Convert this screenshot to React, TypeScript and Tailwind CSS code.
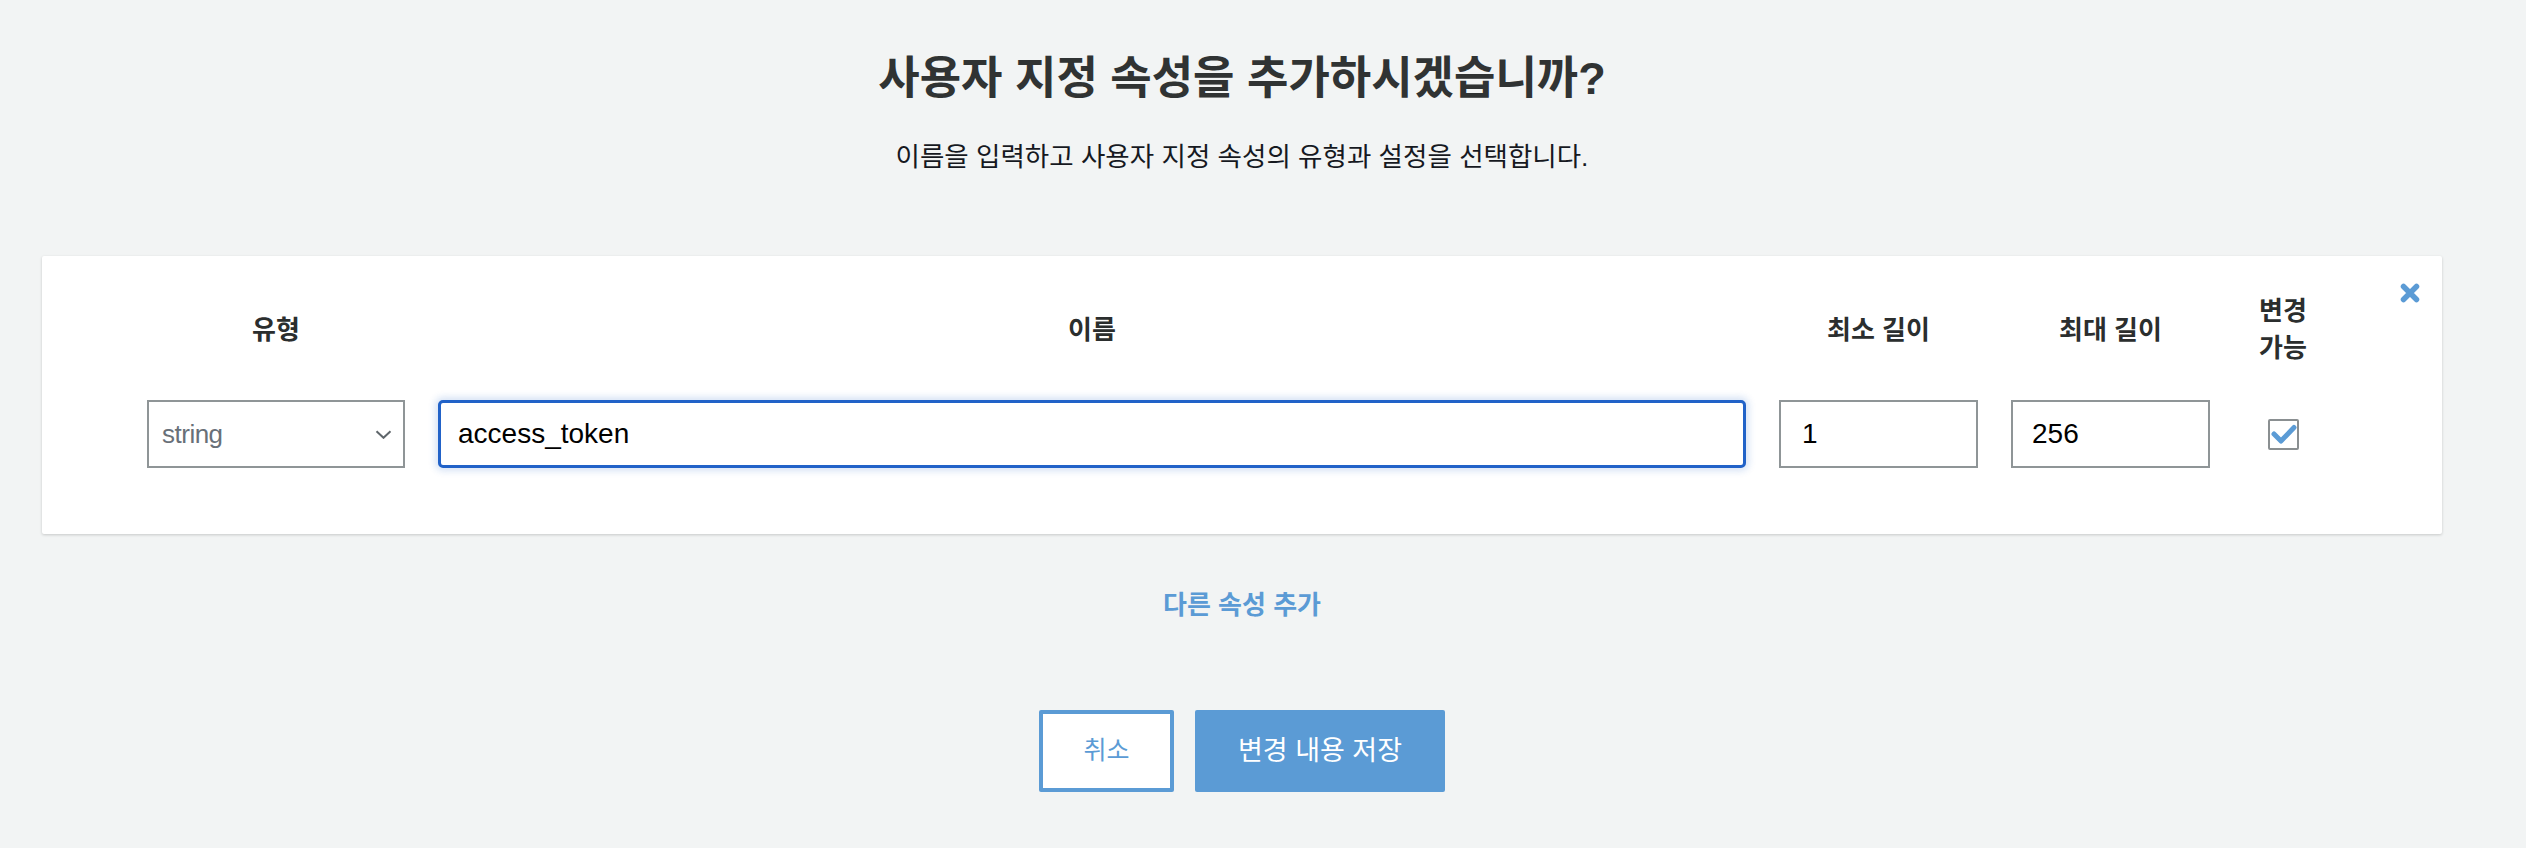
import { useState } from "react";

const COLUMN_HEADERS = [
  { key: "type", label: "유형", width: "w-[258px]" },
  { key: "name", label: "이름", width: "w-[1308px]" },
  { key: "min", label: "최소 길이", width: "w-[199px]" },
  { key: "max", label: "최대 길이", width: "w-[199px]" },
];

function CloseIcon() {
  return (
    <svg viewBox="0 0 20 20" className="h-[20px] w-[20px]">
      <path d="M3.5 3.5 L16.5 16.5 M16.5 3.5 L3.5 16.5" stroke="#5b9bd5" strokeWidth="5.5" strokeLinecap="round" fill="none" />
    </svg>
  );
}

function CheckIcon() {
  return (
    <svg viewBox="0 0 27 27" className="h-[27px] w-[27px]">
      <path d="M4 13 L11 20 L24 6.5" stroke="#5b9bd5" strokeWidth="5" strokeLinecap="round" strokeLinejoin="round" fill="none" />
    </svg>
  );
}

function ChevronDown() {
  return (
    <svg viewBox="0 0 17 9" className="h-[9px] w-[17px]">
      <path d="M1.5 1.2 L8.5 7.8 L15.5 1.2" stroke="#5f666b" strokeWidth="2" fill="none" />
    </svg>
  );
}

export default function App() {
  const [name, setName] = useState("access_token");
  const [min, setMin] = useState("1");
  const [max, setMax] = useState("256");
  const [mutable, setMutable] = useState(true);

  return (
    <div className="min-h-[848px] w-full bg-[#f2f4f4] font-['Liberation_Sans','Noto_Sans_CJK_KR',sans-serif] text-[#16191f]">
      <div className="flex w-[2484px] flex-col items-center px-[42px]">
        <h1 className="mt-[53px] text-[45px] font-bold leading-[52px] text-[#303333]">
          사용자 지정 속성을 추가하시겠습니까?
        </h1>
        <p className="mt-[35px] text-[26.5px] leading-[34px] text-[#16191f]">
          이름을 입력하고 사용자 지정 속성의 유형과 설정을 선택합니다.
        </p>

        <div className="relative mt-[82px] w-full rounded-[2px] bg-white pb-[66px] pl-[105px] pt-[36px] shadow-[0_1px_3px_rgba(0,0,0,0.18)]">
          <button className="absolute right-[22px] top-[27px]">
            <CloseIcon />
          </button>

          <div className="flex h-[76px] items-center gap-[33px]">
            {COLUMN_HEADERS.map((h) => (
              <div key={h.key} className={`${h.width} text-center text-[26px] font-bold leading-[37px] text-[#2b2e2e]`}>
                {h.label}
              </div>
            ))}
            <div className="w-[80px] text-center text-[26px] font-bold leading-[37px] text-[#2b2e2e]">
              변경
              <br />
              가능
            </div>
          </div>

          <div className="mt-[32px] flex h-[68px] items-center gap-[33px]">
            <div className="flex h-[68px] w-[258px] items-center justify-between border-2 border-[#8f9597] bg-white pl-[13px] pr-[11px]">
              <span className="text-[26px] tracking-[-0.5px] text-[#687078]">string</span>
              <ChevronDown />
            </div>
            <input
              value={name}
              onChange={(e) => setName(e.target.value)}
              className="h-[68px] w-[1308px] rounded-[5px] border-[3px] border-[#2162c8] bg-white px-[17px] text-[28px] text-black shadow-[0_0_7px_3px_rgba(33,98,200,0.18)] outline-none"
            />
            <input
              value={min}
              onChange={(e) => setMin(e.target.value)}
              className="h-[68px] w-[199px] border-2 border-[#8f9597] bg-white px-[21px] text-[28px] text-black outline-none"
            />
            <input
              value={max}
              onChange={(e) => setMax(e.target.value)}
              className="h-[68px] w-[199px] border-2 border-[#8f9597] bg-white px-[19px] text-[28px] text-black outline-none"
            />
            <div className="flex w-[80px] justify-center">
              <button
                onClick={() => setMutable(!mutable)}
                className="flex h-[31px] w-[31px] items-center justify-center rounded-[2px] border-2 border-[#8a8f91] bg-white"
              >
                {mutable && <CheckIcon />}
              </button>
            </div>
          </div>
        </div>

        <button className="mt-[54px] text-[26px] font-bold leading-[34px] text-[#5b9bd5]">다른 속성 추가</button>

        <div className="mt-[88px] flex gap-[21px]">
          <button className="h-[82px] w-[135px] rounded-[2px] border-[4px] border-[#5b9bd5] bg-white text-[25px] text-[#5b9bd5]">
            취소
          </button>
          <button className="h-[82px] w-[250px] rounded-[2px] bg-[#5b9bd5] text-[27px] text-white">변경 내용 저장</button>
        </div>
      </div>
    </div>
  );
}
